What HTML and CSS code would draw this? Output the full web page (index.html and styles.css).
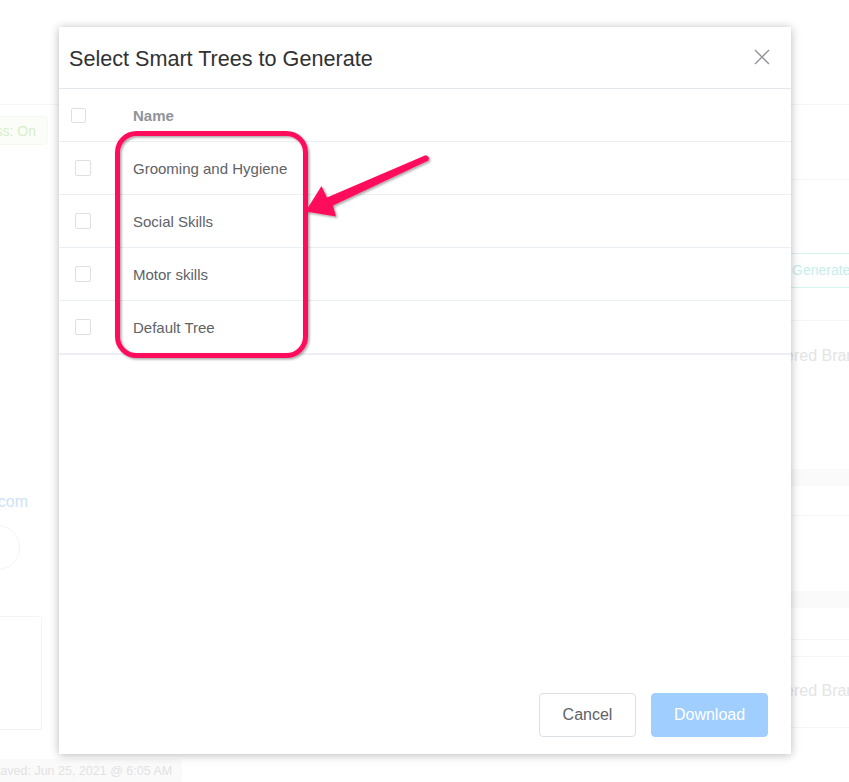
FILE: index.html
```html
<!DOCTYPE html>
<html>
<head>
<meta charset="utf-8">
<link rel="stylesheet" href="styles.css">
</head>
<body>
<div class="page">
  <div class="bg">
    <div class="bg-left">
      <div class="blk h78 line"></div>
      <div class="tag-on"><span>Access: On</span></div>
      <div class="blk h346"></div>
      <div class="clipr email"><span>support@example.com</span></div>
      <div class="circle"></div>
      <div class="blk h46"></div>
      <div class="box"></div>
      <div class="tag-saved">Saved: Jun 25, 2021 @ 6:05 AM</div>
    </div>
    <div class="bg-right">
      <div class="blk h78 line"></div>
      <div class="blk h75 line"></div>
      <div class="blk h73"></div>
      <div class="gen-btn">Generate</div>
      <div class="blk h33 line"></div>
      <div class="faded-text r1">ered Brand</div>
      <div class="blk h103"></div>
      <div class="band"></div>
      <div class="blk h30 line"></div>
      <div class="blk h75"></div>
      <div class="band"></div>
      <div class="blk h32 line"></div>
      <div class="blk h17 line"></div>
      <div class="faded-text r2">ered Brand</div>
      <div class="blk h27 line"></div>
    </div>
  </div>

  <div class="dialog">
    <div class="dialog-header">
      <span class="dialog-title">Select Smart Trees to Generate</span>
      <svg class="close" width="16" height="16" viewBox="0 0 16 16"><path d="M1 1 L15 15 M15 1 L1 15" stroke="#909399" stroke-width="1.4" fill="none"/></svg>
    </div>
    <div class="table">
      <div class="row head">
        <div class="cell-check"><span class="checkbox"></span></div>
        <div class="cell-name">Name</div>
      </div>
      <div class="row">
        <div class="cell-check"><span class="checkbox"></span></div>
        <div class="cell-name">Grooming and Hygiene</div>
      </div>
      <div class="row">
        <div class="cell-check"><span class="checkbox"></span></div>
        <div class="cell-name">Social Skills</div>
      </div>
      <div class="row">
        <div class="cell-check"><span class="checkbox"></span></div>
        <div class="cell-name">Motor skills</div>
      </div>
      <div class="row last">
        <div class="cell-check"><span class="checkbox"></span></div>
        <div class="cell-name">Default Tree</div>
      </div>
    </div>
    <div class="dialog-footer">
      <button class="btn btn-cancel">Cancel</button>
      <button class="btn btn-primary">Download</button>
    </div>
  </div>

  <svg class="annot" width="849" height="782" viewBox="0 0 849 782">
    <defs>
      <filter id="sh" x="-20%" y="-20%" width="140%" height="140%">
        <feDropShadow dx="1.5" dy="1.5" stdDeviation="1.2" flood-color="#000" flood-opacity="0.35"/>
      </filter>
    </defs>
    <rect x="117.5" y="133.5" width="188" height="222" rx="19" ry="19" fill="none" stroke="#ff0f5b" stroke-width="5" filter="url(#sh)"/>
    <path d="M425.5 155.2 Q430 156 428.5 160.5 L333 205.5 L336 216.5 L305.5 211.5 L321.5 186 L327 197.5 Z" fill="#ff0f5b" filter="url(#sh)"/>
  </svg>
</div>
</body>
</html>
```
FILE: styles.css
```css
* { box-sizing: border-box; }
html, body { margin: 0; padding: 0; background: #fff; }
body { font-family: "Liberation Sans", Arial, Helvetica, sans-serif; }

.page {
  position: relative;
  width: 849px;
  height: 782px;
  overflow: hidden;
  background: #fff;
}

/* faded background page */
.bg {
  display: flex;
  justify-content: space-between;
  align-items: flex-start;
  padding-top: 27px;
}
.bg-left { width: 60px; display: flex; flex-direction: column; }
.bg-right { width: 58px; display: flex; flex-direction: column; }
.bg-left > *, .bg-right > * { flex: none; }
.line { border-bottom: 1px solid #f6f6f6; }
.h78 { height: 78px; }
.h75 { height: 75px; }
.h73 { height: 73px; }
.h346 { height: 347px; }
.h46 { height: 46px; }
.h33 { height: 33px; }
.h103 { height: 103px; }
.h30 { height: 30px; }
.h32 { height: 32px; }
.h17 { height: 17px; }
.h27 { height: 27px; }

.tag-on {
  margin-top: 11px;
  width: 48px;
  height: 29px;
  background: #fbfdf9;
  border: 1px solid #f4faf0;
  border-left: 0;
  border-radius: 0 4px 4px 0;
  display: flex;
  justify-content: flex-end;
  align-items: center;
  overflow: hidden;
  padding-right: 11px;
  font-size: 14px;
  color: #d6efc8;
  white-space: nowrap;
}
.clipr {
  display: flex;
  justify-content: flex-end;
  overflow: hidden;
  white-space: nowrap;
}
.email {
  width: 28px;
  height: 20px;
  font-size: 16px;
  color: #cbe3fb;
  line-height: 20px;
}
.circle {
  margin-top: 13px;
  margin-left: -25px;
  width: 45px;
  height: 45px;
  border-radius: 50%;
  border: 1px solid #f4f4f4;
}
.box {
  width: 42px;
  height: 114px;
  border: 1px solid #f4f4f4;
  border-left: 0;
  border-radius: 0 4px 0 0;
}
.tag-saved {
  margin-top: 29px;
  margin-left: -42px;
  width: 224px;
  height: 25px;
  background: #fafafa;
  border-radius: 4px;
  padding-left: 34px;
  font-size: 12.5px;
  line-height: 25px;
  color: #e2e2e2;
  white-space: nowrap;
}

.gen-btn {
  height: 35px;
  width: 80px;
  border: 1px solid #d6f4f1;
  border-left: 0;
  border-right: 0;
  color: #c8eeea;
  font-size: 14px;
  line-height: 33px;
  padding-left: 1px;
  white-space: nowrap;
}
.faded-text {
  height: 20px;
  margin-left: -6px;
  font-size: 16px;
  line-height: 20px;
  color: #e4e4e4;
  white-space: nowrap;
}
.r1 { margin-top: 25px; }
.r2 { margin-top: 24px; }
.band { height: 17px; background: #fafafa; }

/* dialog */
.dialog {
  position: absolute;
  left: 59px;
  top: 27px;
  width: 732px;
  height: 727px;
  background: #fff;
  box-shadow: 0 1px 9px rgba(0, 0, 0, 0.28);
  display: flex;
  flex-direction: column;
}
.dialog-header {
  height: 62px;
  border-bottom: 1px solid #e4e7ed;
  display: flex;
  align-items: center;
  justify-content: space-between;
  padding: 2px 21px 0 10px;
}
.dialog-title {
  font-size: 21.6px;
  color: #303133;
}
.close { display: block; margin-top: -3px; }

.table { display: flex; flex-direction: column; }
.row {
  height: 53px;
  display: flex;
  align-items: center;
  border-bottom: 1px solid #ebeef5;
}
.row.last { border-bottom: 2px solid #ebeef5; height: 54px; }
.cell-check { width: 74px; padding-left: 16px; display: flex; }
.head .cell-check { padding-left: 12px; }
.checkbox {
  width: 16px;
  height: 16px;
  border: 1px solid #dcdfe6;
  border-radius: 2px;
  background: #fff;
  display: block;
}
.head .checkbox { width: 15px; height: 15px; margin-top: 1px; }
.cell-name {
  font-size: 15px;
  color: #606266;
  padding-top: 1px;
}
.head .cell-name {
  font-weight: bold;
  font-size: 15px;
  color: #909399;
  padding-top: 0;
}

.dialog-footer {
  margin-top: auto;
  display: flex;
  justify-content: flex-end;
  gap: 15px;
  padding: 0 23px 17px 0;
}
.btn {
  height: 44px;
  border-radius: 4px;
  font-family: "Liberation Sans", Arial, Helvetica, sans-serif;
  font-size: 16px;
  padding: 0;
  cursor: pointer;
}
.btn-cancel {
  width: 97px;
  background: #fff;
  border: 1px solid #dcdfe6;
  color: #606266;
}
.btn-primary {
  width: 117px;
  background: #a0cfff;
  border: 1px solid #a0cfff;
  color: #fff;
}

.annot {
  position: absolute;
  left: 0;
  top: 0;
  pointer-events: none;
}
```
